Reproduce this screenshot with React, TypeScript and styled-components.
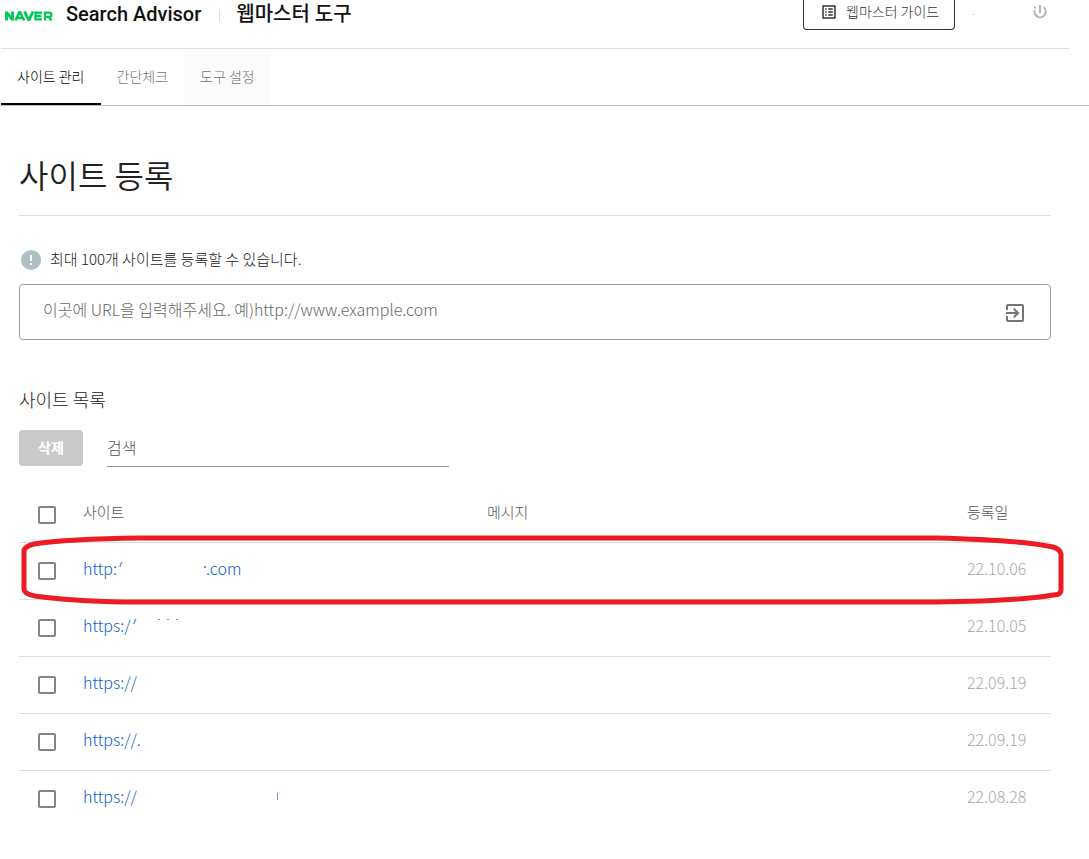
import React from 'react';
import styled, { createGlobalStyle } from 'styled-components';
import { MdListAlt, MdExitToApp } from 'react-icons/md';

const GlobalStyle = createGlobalStyle`
  *, *::before, *::after { box-sizing: border-box; }
  body {
    margin: 0;
    background: #fff;
    color: #212121;
    font-family: 'Noto Sans CJK KR', 'Noto Sans', sans-serif;
    font-size: 14px;
    font-weight: 300;
    line-height: 20px;
  }
  button, input { font: inherit; }
  a { text-decoration: none; color: inherit; }
`;

const Header = styled.header`
  display: flex;
  align-items: flex-start;
  height: 49px;
  margin: 0 20px 0 1px;
  padding-left: 4px;
  border-bottom: 1px solid #e0e0e0;
`;

const Brand = styled.a`
  display: flex;
  align-items: center;
  height: 28px;
  color: #111;
  font-family: Roboto, 'Noto Sans CJK KR', sans-serif;
  font-size: 20px;
  font-weight: 500;
  white-space: nowrap;
`;

const NaverLogo = styled.svg`
  width: 48px;
  height: 10px;
  margin: 4px 13px 0 0;
`;

const BrandDivider = styled.span`
  width: 1px;
  height: 12px;
  margin: 2px 16px 0 18px;
  background: #dcdcdc;
`;

const HeaderActions = styled.div`
  display: flex;
  align-items: flex-start;
  margin-left: auto;
`;

const GuideButton = styled.button`
  display: flex;
  align-items: flex-start;
  gap: 8px;
  width: 152px;
  height: 30px;
  padding: 1px 16px 0;
  border: 1px solid #333;
  border-top: 0;
  border-radius: 0 0 4px 4px;
  background: #fff;
  color: #333;
  white-space: nowrap;
  svg { width: 18px; height: 18px; flex: none; margin-top: 2px; }
`;

const AccountDot = styled.i`
  width: 1px;
  height: 1px;
  margin: 14px 0 0 18px;
  background: #8fd0c0;
`;

const PowerButton = styled.button`
  display: flex;
  margin: 4px 21px 0 58px;
  padding: 0;
  border: 0;
  background: none;
  color: #b4b4b4;
  svg { width: 16px; height: 16px; }
`;

const Tabs = styled.nav`
  display: flex;
  height: 57px;
  padding-left: 1px;
  border-bottom: 1px solid #bdbdbd;
`;

const Tab = styled.a<{ $active?: boolean; $shaded?: boolean }>`
  display: flex;
  align-items: center;
  height: 56px;
  padding: 0 16px 1px;
  border-bottom: 2px solid ${p => (p.$active ? '#000' : 'transparent')};
  background: ${p => (p.$shaded ? '#fbfbfb' : 'transparent')};
  color: ${p => (p.$active ? '#000' : '#757575')};
`;

const Main = styled.main`
  margin: 0 38px 0 19px;
`;

const Title = styled.h1`
  margin: 0;
  padding: 44px 0 17px;
  border-bottom: 1px solid #e0e0e0;
  font-size: 32px;
  font-weight: 350;
  line-height: 48px;
`;

const Notice = styled.p`
  display: flex;
  align-items: center;
  gap: 9px;
  margin: 33px 0 13px 2px;
  font-size: 15px;
  line-height: 20px;
  svg { width: 20px; height: 20px; }
`;

const NoticeText = styled.span`
  padding-bottom: 2px;
`;

const UrlField = styled.form`
  display: flex;
  align-items: center;
  height: 56px;
  padding: 0 23px;
  border: 1px solid #9e9e9e;
  border-radius: 4px;
`;

const UrlInput = styled.input`
  flex: 1;
  min-width: 0;
  height: 28px;
  margin-bottom: 6px;
  padding: 0;
  border: 0;
  outline: 0;
  font-size: 16px;
  &::placeholder { color: #666; opacity: 1; }
`;

const SubmitButton = styled.button`
  display: flex;
  padding: 2px 0 0;
  border: 0;
  background: none;
  color: #757575;
  svg { width: 24px; height: 24px; }
`;

const ListTitle = styled.h2`
  margin: 47px 0 19px;
  font-size: 18px;
  font-weight: 300;
  line-height: 24px;
`;

const Toolbar = styled.div`
  display: flex;
  gap: 24px;
`;

const DeleteButton = styled.button`
  width: 64px;
  height: 36px;
  padding: 0 0 2px;
  border: 0;
  border-radius: 4px;
  background: #cacaca;
  color: #fff;
  font-weight: 700;
`;

const SearchInput = styled.input`
  width: 342px;
  height: 37px;
  padding: 0 0 2px;
  border: 0;
  border-bottom: 1px solid #949494;
  outline: 0;
  font-size: 16px;
  &::placeholder { color: #555; opacity: 1; }
`;

const TableArea = styled.div`
  position: relative;
  margin-top: 19px;
`;

const Table = styled.table`
  width: 100%;
  table-layout: fixed;
  border-collapse: separate;
  border-spacing: 0;
`;

const HeadCell = styled.th<{ $width?: string }>`
  width: ${p => p.$width ?? 'auto'};
  height: 57px;
  padding: 0 0 5px;
  border-bottom: 1px solid #e0e0e0;
  color: #555;
  font-size: 15px;
  font-weight: 300;
  text-align: left;
`;

const Cell = styled.td<{ $muted?: boolean }>`
  height: 57px;
  padding: 0 0 6px;
  border-bottom: 1px solid #e0e0e0;
  color: ${p => (p.$muted ? '#a8a8a8' : '#212121')};
  font-size: 16px;
  tr:last-child & { border-bottom-color: transparent; }
`;

const Checkbox = styled.input`
  appearance: none;
  display: block;
  width: 18px;
  height: 18px;
  margin: 6px 0 0 19px;
  border: 2px solid #858585;
  border-radius: 2px;
`;

const SiteLink = styled.a`
  display: flex;
  align-items: center;
  color: #0d5cc8;
  font-size: 16px;
  font-weight: 300;
`;

const Remnant = styled.svg`
  height: 20px;
  fill: #5d94dc;
`;

const Marker = styled.svg`
  position: absolute;
  top: 49px;
  left: 2px;
  width: calc(100% + 10px);
  height: 70px;
  overflow: visible;
  pointer-events: none;
  path {
    fill: none;
    stroke: #ed1c24;
    stroke-width: 5;
    stroke-linejoin: round;
    vector-effect: non-scaling-stroke;
  }
`;

type Site = { id: string; url: React.ReactNode; date: string };

const sites: Site[] = [
  {
    id: 'site1',
    url: (
      <>
        http:
        <Remnant width="89" viewBox="0 0 89 20" aria-hidden="true">
          <path d="M4 4h1.500l-2 5h-1.500zM87 8h2v2h-2z" />
        </Remnant>
        .com
      </>
    ),
    date: '22.10.06',
  },
  {
    id: 'site2',
    url: (
      <>
        https:/
        <Remnant width="54" viewBox="0 0 54 20" aria-hidden="true">
          <path d="M4 4h1.500l-2 5h-1.500zM27 4h2v1h-2zM36 4h2v1h-2zM45 4h2v1h-2z" />
        </Remnant>
      </>
    ),
    date: '22.10.05',
  },
  { id: 'site3', url: 'https://', date: '22.09.19' },
  { id: 'site4', url: 'https://.', date: '22.09.19' },
  {
    id: 'site5',
    url: (
      <>
        https://
        <Remnant width="144" viewBox="0 0 144 20" aria-hidden="true">
          <path d="M140 7h1v7h-1z" />
        </Remnant>
      </>
    ),
    date: '22.08.28',
  },
];

export default function App() {
  return (
    <>
      <GlobalStyle />
      <Header>
        <Brand href="#">
          <NaverLogo viewBox="0 0 48 10" fill="none" stroke="#03c75a" strokeWidth="2.8" role="img" aria-label="NAVER">
            <path d="M1.5 9.5V.5M1.5 1l6 8M7.5 9.5V.5" />
            <path d="M10.5 9.5l4-8.5h.6l4 8.5M12.5 7h5" strokeWidth="2.5" />
            <path d="M19.5.5l4 8.2h.6l4-8.2" />
            <path d="M37 1.6h-6.5v6.8H37M30.5 5h6" strokeWidth="2.3" />
            <path d="M40 9.5V1.6h4.2c2.8 0 2.8 4.2 0 4.2H40M43.5 5.5l3 4" strokeWidth="2.3" />
          </NaverLogo>
          <span>Search Advisor</span>
          <BrandDivider />
          <span>웹마스터 도구</span>
        </Brand>
        <HeaderActions>
          <GuideButton type="button">
            <MdListAlt />
            웹마스터 가이드
          </GuideButton>
          <AccountDot />
          <PowerButton type="button" aria-label="로그아웃">
            <svg viewBox="0 0 16 16" fill="none" stroke="currentColor" strokeWidth="2" aria-hidden="true">
              <path d="M8 1v8M11.500 3.200A5.600 5.600 0 1 1 2.800 6M3 2.500v2" />
            </svg>
          </PowerButton>
        </HeaderActions>
      </Header>
      <Tabs>
        <Tab href="#" $active>사이트 관리</Tab>
        <Tab href="#">간단체크</Tab>
        <Tab href="#" $shaded>도구 설정</Tab>
      </Tabs>
      <Main>
        <Title>사이트 등록</Title>
        <Notice>
          <svg viewBox="0 0 20 20" aria-hidden="true">
            <circle cx="10" cy="10" r="10" fill="#b0bec5" />
            <path d="M9 5h2v6H9zM9 13h2v2H9z" fill="#fff" />
          </svg>
          <NoticeText>최대 100개 사이트를 등록할 수 있습니다.</NoticeText>
        </Notice>
        <UrlField>
          <UrlInput aria-label="사이트 URL" placeholder="이곳에 URL을 입력해주세요. 예)http://www.example.com" />
          <SubmitButton type="button" aria-label="등록">
            <MdExitToApp />
          </SubmitButton>
        </UrlField>
        <ListTitle>사이트 목록</ListTitle>
        <Toolbar>
          <DeleteButton type="button">삭제</DeleteButton>
          <SearchInput aria-label="검색" placeholder="검색" />
        </Toolbar>
        <TableArea>
          <Table>
            <thead>
              <tr>
                <HeadCell $width="64px"><Checkbox type="checkbox" aria-label="전체 선택" /></HeadCell>
                <HeadCell>사이트</HeadCell>
                <HeadCell $width="480px">메시지</HeadCell>
                <HeadCell $width="84px">등록일</HeadCell>
              </tr>
            </thead>
            <tbody>
              {sites.map(site => (
                <tr key={site.id}>
                  <Cell><Checkbox type="checkbox" aria-labelledby={site.id} /></Cell>
                  <Cell><SiteLink id={site.id} href="#">{site.url}</SiteLink></Cell>
                  <Cell />
                  <Cell $muted>{site.date}</Cell>
                </tr>
              ))}
            </tbody>
          </Table>
          <Marker viewBox="0 0 1042 70" preserveAspectRatio="none" aria-hidden="true">
            <path d="M3 15Q5 11 13 9Q45 4 120 3L915 3Q1000 5 1032 12Q1039 14 1040 19V55Q1040 60 1032 60Q1000 66 915 67H104Q50 66 14 61Q3 59 3 54Z" />
          </Marker>
        </TableArea>
      </Main>
    </>
  );
}
